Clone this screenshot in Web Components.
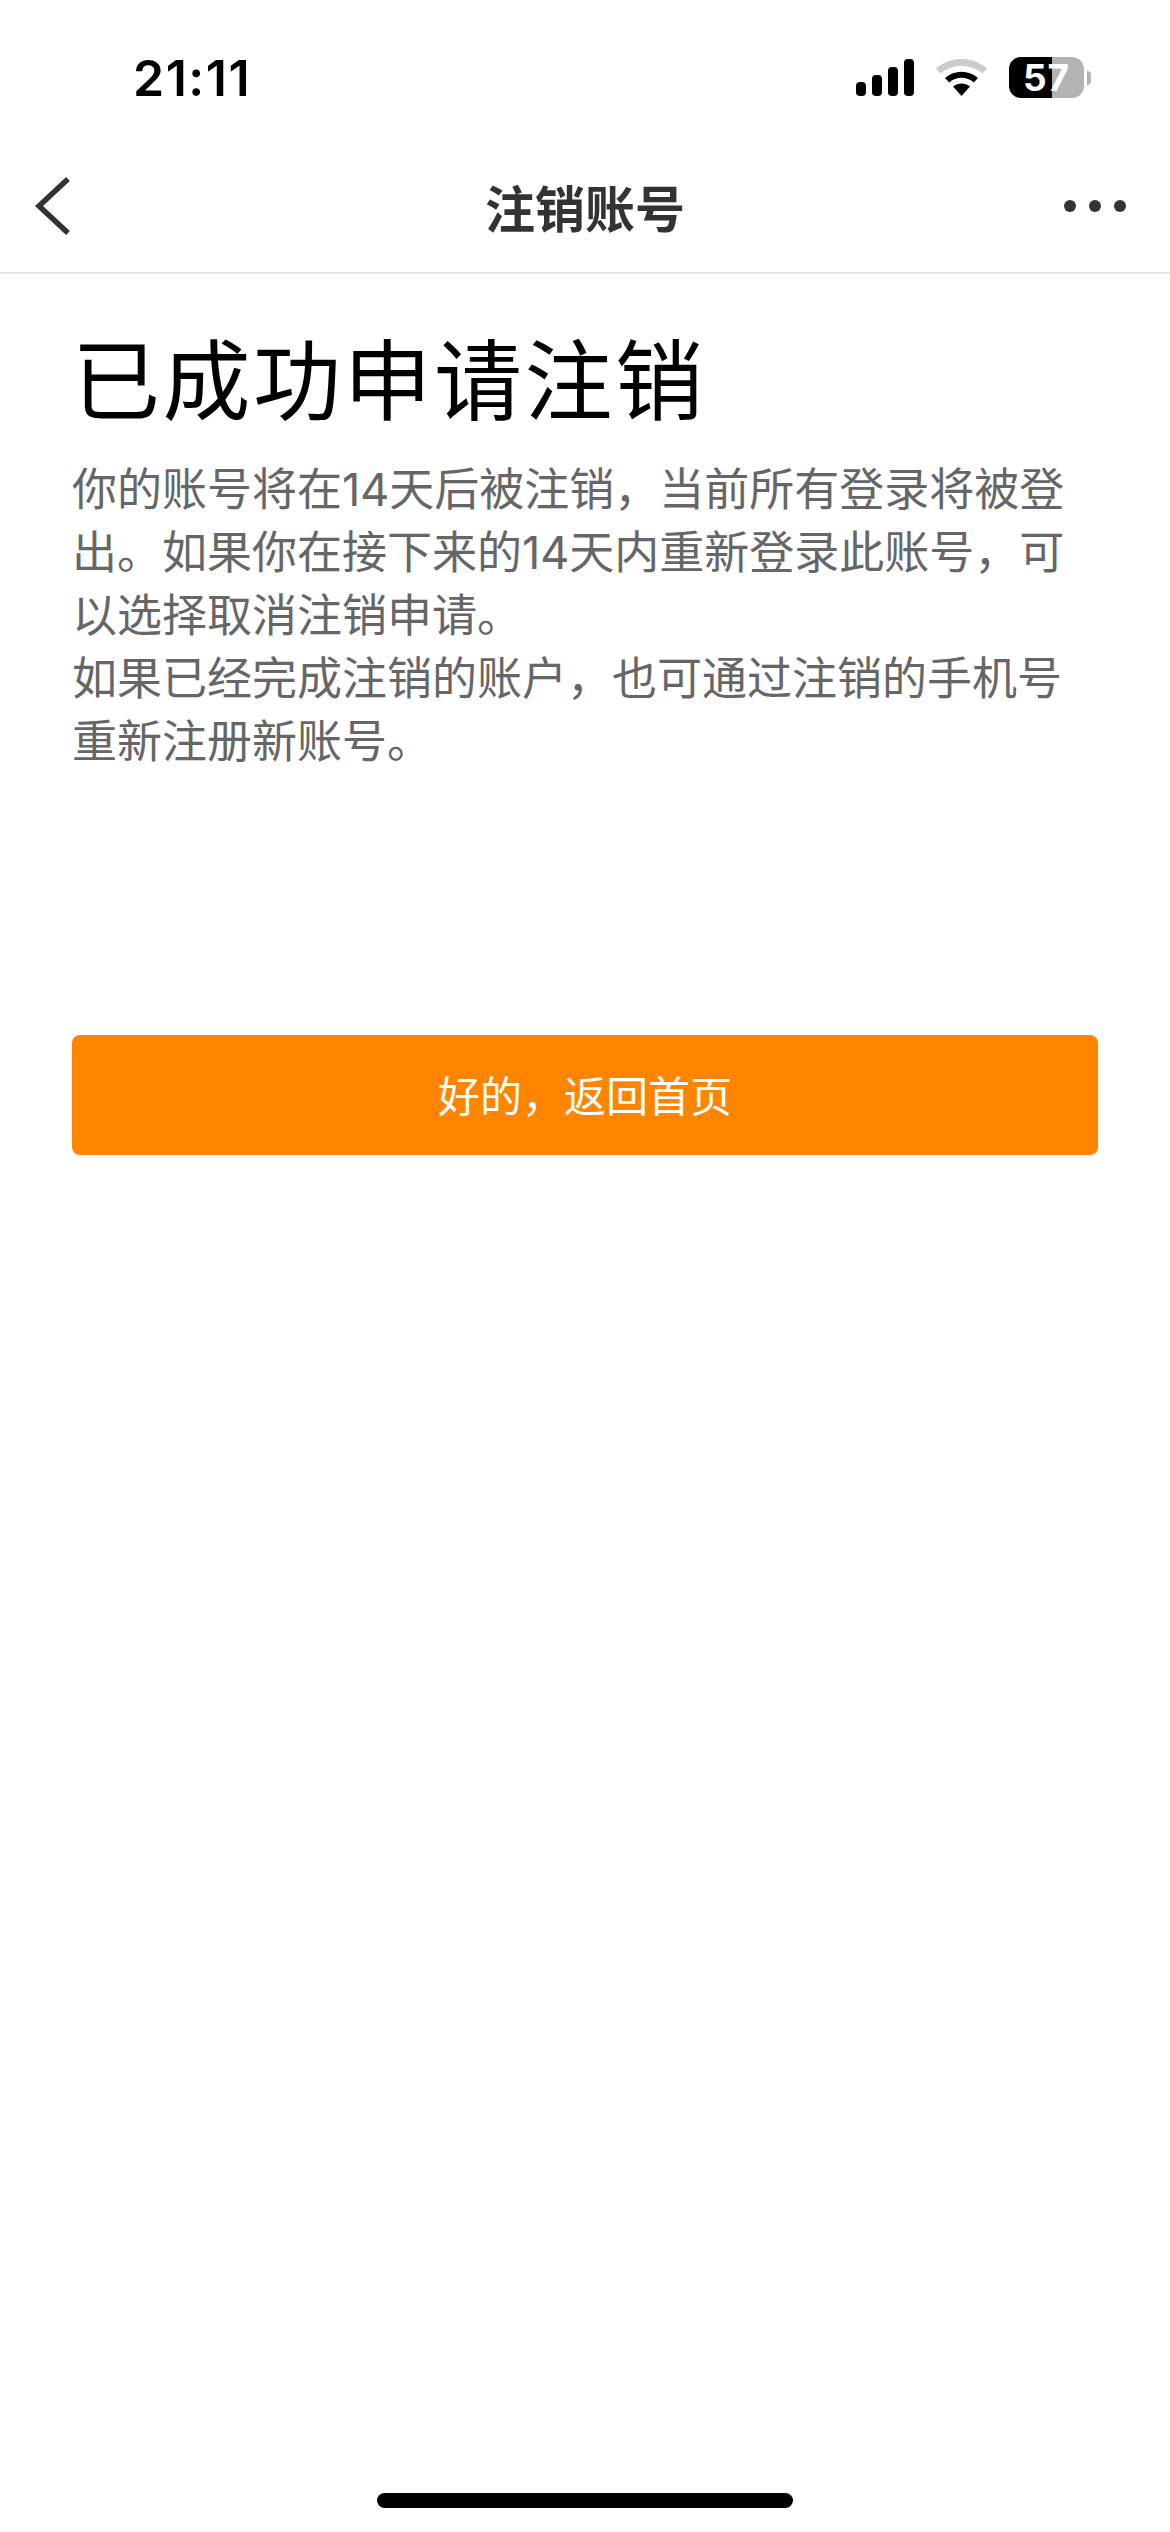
<!DOCTYPE html>
<html lang="zh-CN">
<head>
<meta charset="utf-8">
<title>注销账号</title>
<style>
  html, body { margin: 0; padding: 0; background: #fff; }
  body { font-family: "Noto Sans CJK SC", "Noto Sans", sans-serif; }
</style>
</head>
<body>
<cancel-page>
  <status-bar time="21:11" battery="57"></status-bar>
  <nav-bar>注销账号</nav-bar>
  <notice-panel heading="已成功申请注销">
    <p>你的账号将在14天后被注销，当前所有登录将被登出。如果你在接下来的14天内重新登录此账号，可以选择取消注销申请。</p>
    <p>如果已经完成注销的账户，也可通过注销的手机号重新注册新账号。</p>
  </notice-panel>
  <primary-button>好的，返回首页</primary-button>
</cancel-page>

<script>
class CancelPage extends HTMLElement {
  constructor() {
    super()
    this.attachShadow({ mode: 'open' }).innerHTML = `
      <style>
        :host{
          display: flex;
          flex-direction: column;
          width: 1170px;
          height: 2532px;
          background: #fff;
          overflow: hidden;
        }
        .main{ flex: 1; }
        .home{
          display: flex;
          justify-content: center;
          padding-bottom: 24px;
        }
        .home i{
          display: block;
          width: 416px;
          height: 15px;
          border-radius: 8px;
          background: #000;
        }
      </style>
      <div class="main"><slot></slot></div>
      <div class="home"><i></i></div>
    `
  }
}

class StatusBar extends HTMLElement {
  constructor() {
    super()
    const time = this.getAttribute('time')
    const battery = this.getAttribute('battery')
    this.attachShadow({ mode: 'open' }).innerHTML = `
      <style>
        :host{
          display: flex;
          align-items: center;
          justify-content: space-between;
          box-sizing: border-box;
          height: 153px;
          padding: 2px 79px 0 133px;
          font-family: Inter, Roboto, sans-serif;
          color: #000;
        }
        .time{
          font-size: 50px;
          font-weight: 600;
          letter-spacing: 1.500px;
          line-height: 50px;
        }
        .icons{
          display: flex;
          align-items: center;
          gap: 22px;
        }
        svg{ display: block; }
        .battery{
          display: flex;
          align-items: center;
          gap: 3px;
        }
        .level{
          width: 75px;
          height: 41px;
          border-radius: 12px;
          background: linear-gradient(90deg, #000 0 43px, #b3b3b3 43px);
          color: #fff;
          font-size: 37px;
          font-weight: 700;
          letter-spacing: 1px;
          line-height: 41px;
          text-align: center;
        }
        .cap{
          width: 4px;
          height: 14px;
          border-radius: 0 7px 7px 0;
          background: #b3b3b3;
        }
      </style>
      <span class="time">${time}</span>
      <div class="icons">
        <svg width="58" height="37" viewBox="0 0 58 37" fill="#000">
          <rect x="0" y="23" width="10" height="14" rx="4"/>
          <rect x="16" y="16" width="10" height="21" rx="4"/>
          <rect x="32" y="8" width="10" height="29" rx="4"/>
          <rect x="48" y="0" width="10" height="37" rx="4"/>
        </svg>
        <svg width="51" height="37" viewBox="0 0 51 37">
          <path d="M0 9.500C14.500-3.200 36.500-3.200 51 9.500L46.500 14.500C34.500 4.500 16.500 4.500 4.500 14.500Z" fill="#cccccc"/>
          <path d="M9 19C18.500 10.500 32.500 10.500 42 19L37.800 23.500C30.500 17.300 20.500 17.300 13.200 23.500Z" fill="#000"/>
          <path d="M17 27.500C21.800 23.500 29.200 23.500 34 27.500L25.500 37Z" fill="#000"/>
        </svg>
        <div class="battery">
          <div class="level">${battery}</div>
          <div class="cap"></div>
        </div>
      </div>
    `
  }
}

class NavBar extends HTMLElement {
  constructor() {
    super()
    this.attachShadow({ mode: 'open' }).innerHTML = `
      <style>
        :host{
          display: grid;
          grid-template-columns: 200px 1fr 200px;
          align-items: center;
          box-sizing: border-box;
          height: 121px;
          padding-bottom: 13px;
          border-bottom: 2px solid #e6e6e6;
          color: #333;
        }
        .title{
          text-align: center;
          font-size: 50px;
          font-weight: 600;
          line-height: 60px;
        }
        .back{ padding-left: 34px; }
        .more{
          display: flex;
          justify-content: flex-end;
          gap: 13px;
          padding-right: 44px;
        }
        .more i{
          display: block;
          width: 12px;
          height: 12px;
          border-radius: 50%;
          background: #333;
        }
        svg{ display: block; }
      </style>
      <div class="back">
        <svg width="38" height="58" viewBox="0 0 38 58" fill="none" stroke="#333" stroke-width="5.500">
          <path d="M34 2 L5 29 L34 56"/>
        </svg>
      </div>
      <div class="title"><slot></slot></div>
      <div class="more"><i></i><i></i><i></i></div>
    `
  }
}

class NoticePanel extends HTMLElement {
  constructor() {
    super()
    this.attachShadow({ mode: 'open' }).innerHTML = `
      <style>
        :host{
          display: block;
          padding: 46px 72px 0;
        }
        h1{
          margin: 0 0 28px;
          font-size: 88px;
          font-weight: 400;
          line-height: 110px;
          letter-spacing: 2.500px;
          color: #000;
        }
        .body{
          font-family: Inter, "Noto Sans CJK SC", sans-serif;
          font-size: 45px;
          line-height: 63px;
          color: #666;
        }
        ::slotted(p){ margin: 0; }
      </style>
      <h1>${this.getAttribute('heading')}</h1>
      <div class="body"><slot></slot></div>
    `
  }
}

class PrimaryButton extends HTMLElement {
  constructor() {
    super()
    this.attachShadow({ mode: 'open' }).innerHTML = `
      <style>
        :host{
          display: flex;
          align-items: center;
          justify-content: center;
          box-sizing: border-box;
          height: 120px;
          margin: 262px 72px 0;
          padding-bottom: 4px;
          border-radius: 8px;
          background: #ff8400;
          color: #fff;
          font-size: 42px;
        }
      </style>
      <slot></slot>
    `
  }
}

customElements.define('cancel-page', CancelPage)
customElements.define('status-bar', StatusBar)
customElements.define('nav-bar', NavBar)
customElements.define('notice-panel', NoticePanel)
customElements.define('primary-button', PrimaryButton)
</script>
</body>
</html>
